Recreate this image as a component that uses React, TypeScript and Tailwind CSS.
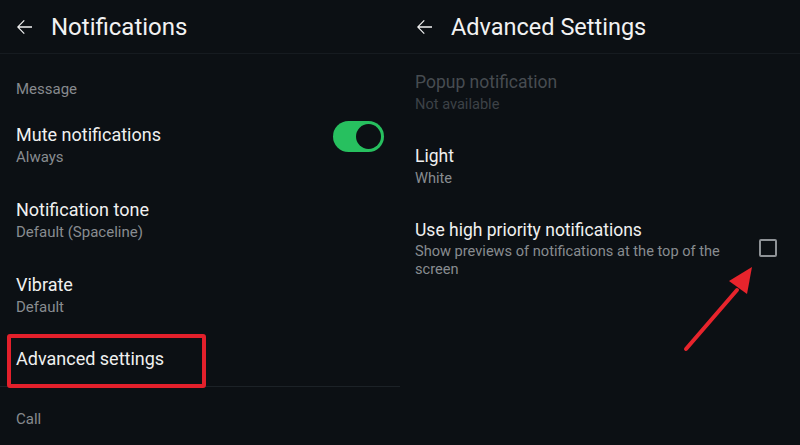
import React from "react";

const BackArrow = () => (
  <svg width="24" height="24" viewBox="0 0 24 24" className="shrink-0">
    <path
      d="M20 11.25H7.3l5.4-5.4L11.85 5 5 12l6.85 7 .85-.85-5.4-5.4H20v-1.5z"
      fill="#f2f2f2"
    />
  </svg>
);

const Header = ({ title, size }: { title: string; size: string }) => (
  <div className="h-[54px] flex items-center border-b border-[#161b20] pl-3">
    <BackArrow />
    <span className={`ml-[15px] leading-[30px] text-[#f2f2f2] ${size}`}>{title}</span>
  </div>
);

const Item = ({
  title,
  sub,
  className = "",
  dim = false,
  small = false,
}: {
  title: string;
  sub?: string;
  className?: string;
  dim?: boolean;
  small?: boolean;
}) => (
  <div className={className}>
    <div
      className={`${small ? "text-[17.5px]" : "text-[18px]"} leading-[24px] ${
        dim ? "text-[#474c51]" : "text-[#f0f0f0]"
      }`}
    >
      {title}
    </div>
    {sub && (
      <div
        className={`${small ? "text-[14.6px]" : "text-[15px]"} leading-[20px] ${
          dim ? "text-[#3d4247]" : "text-[#888c90]"
        }`}
      >
        {sub}
      </div>
    )}
  </div>
);

export default function App() {
  return (
    <div
      className="w-[800px] h-[445px] bg-[#0c1014] flex overflow-hidden"
      style={{ fontFamily: "Roboto, 'Noto Sans', sans-serif" }}
    >
      {/* Left panel */}
      <div className="w-[400px] relative">
        <Header title="Notifications" size="text-[24px]" />
        <div className="pl-4">
          <div className="mt-[25px] text-[15px] leading-[20px] text-[#878a8e]">Message</div>
          <div className="mt-[24px] flex items-start justify-between pr-4">
            <Item title="Mute notifications" sub="Always" />
            <div className="mt-[-2px] w-[51px] h-[31px] rounded-full bg-[#27c05f] flex items-center justify-end pr-[3px]">
              <div className="w-[25px] h-[25px] rounded-full bg-[#0c1014]" />
            </div>
          </div>
          <Item className="mt-[31px]" title="Notification tone" sub="Default (Spaceline)" />
          <Item className="mt-[31px]" title="Vibrate" sub="Default" />
          <div className="mt-[30px] relative">
            <div className="text-[18px] leading-[24px] text-[#f0f0f0]">Advanced settings</div>
            <div className="absolute left-[-9px] top-[-13px] w-[199px] h-[54px] border-[4px] border-[#e3202b] rounded-[3px]" />
          </div>
        </div>
        <div className="mt-[15px] h-px bg-[#1c2227]" />
        <div className="pl-4 mt-[22px] text-[15px] leading-[20px] text-[#878a8e]">Call</div>
      </div>

      {/* Right panel */}
      <div className="w-[400px] relative">
        <Header title="Advanced Settings" size="text-[23.5px]" />
        <div className="pl-[15px]">
          <Item className="mt-[16px]" title="Popup notification" sub="Not available" dim small />
          <Item className="mt-[30px]" title="Light" sub="White" small />
          <div className="mt-[30px] flex items-center pr-[23px]">
            <div className="w-[330px]">
              <div className="text-[17.5px] leading-[24px] text-[#f0f0f0]">Use high priority notifications</div>
              <div className="text-[14.6px] leading-[18px] text-[#888c90]">
                Show previews of notifications at the top of the screen
              </div>
            </div>
            <div className="ml-auto w-[18px] h-[18px] border-2 border-[#8e9296] rounded-[2px]" />
          </div>
        </div>
        <svg className="absolute left-0 top-0" width="400" height="445" viewBox="0 0 400 445">
          <line x1="286" y1="349" x2="337" y2="290" stroke="#e8242c" strokeWidth="4" strokeLinecap="round" />
          <polygon points="352,267 329,281 347,294" fill="#e8242c" />
        </svg>
      </div>
    </div>
  );
}
